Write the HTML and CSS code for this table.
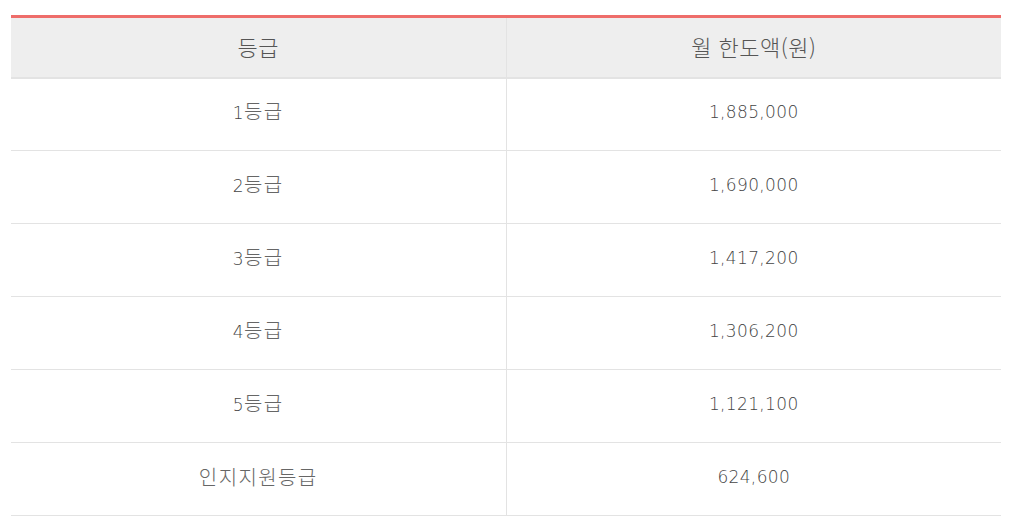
FILE: index.html
```html
<!DOCTYPE html>
<html lang="ko">
<head>
<meta charset="utf-8">
<link rel="stylesheet" href="styles.css">
</head>
<body>
<div class="wrap">
<table class="grade-table">
  <thead>
    <tr><th>등급</th><th>월 한도액(원)</th></tr>
  </thead>
  <tbody>
    <tr><td><span class="num">1</span>등급</td><td class="amount">1,885,000</td></tr>
    <tr><td><span class="num">2</span>등급</td><td class="amount">1,690,000</td></tr>
    <tr><td><span class="num">3</span>등급</td><td class="amount">1,417,200</td></tr>
    <tr><td><span class="num">4</span>등급</td><td class="amount">1,306,200</td></tr>
    <tr><td><span class="num">5</span>등급</td><td class="amount">1,121,100</td></tr>
    <tr><td>인지지원등급</td><td class="amount">624,600</td></tr>
  </tbody>
</table>
</div>
</body>
</html>
```
FILE: styles.css
```css
html, body {
  margin: 0;
  padding: 0;
  background: #fff;
}
.wrap {
  padding: 15px 22px 0 11px;
}
.grade-table {
  width: 990px;
  border-collapse: collapse;
  table-layout: fixed;
  font-family: "Noto Sans CJK KR", "Noto Sans", sans-serif;
  font-weight: 300;
  font-size: 20px;
  line-height: 24px;
  color: #666;
}
.grade-table thead tr {
  border-top: 3px solid #ee6d6a;
}
.grade-table th {
  box-sizing: border-box;
  background: #eeeeee;
  height: 61px;
  padding: 0 0 3px;
  font-size: 22px;
  line-height: 26px;
  font-weight: 300;
  letter-spacing: 0.5px;
  color: #555;
  border-bottom: 2px solid #e3e3e3;
}
.grade-table th + th,
.grade-table td + td {
  border-left: 1px solid #e3e3e3;
}
.grade-table td {
  box-sizing: border-box;
  height: 73px;
  padding: 0 0 4px;
  text-align: center;
  letter-spacing: 1.4px;
  border-bottom: 1px solid #e3e3e3;
}
.grade-table .num,
.grade-table .amount {
  font-family: "DejaVu Sans", "Noto Sans CJK KR", sans-serif;
  font-weight: 200;
  font-size: 17px;
  letter-spacing: 0.35px;
  color: #444;
}
```
